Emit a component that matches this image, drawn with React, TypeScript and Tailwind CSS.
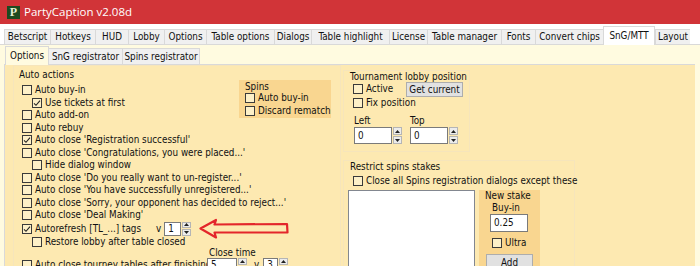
import React from "react";

const tabs = [
  { label: "Betscript", w: "w-[46px]" },
  { label: "Hotkeys", w: "w-[45px]" },
  { label: "HUD", w: "w-[33px]" },
  { label: "Lobby", w: "w-[36px]" },
  { label: "Options", w: "w-[42px]" },
  { label: "Table options", w: "w-[68px]" },
  { label: "Dialogs", w: "w-[37px]" },
  { label: "Table highlight", w: "w-[78px]" },
  { label: "License", w: "w-[38px]" },
  { label: "Table manager", w: "w-[74px]" },
  { label: "Fonts", w: "w-[34px]" },
  { label: "Convert chips", w: "w-[68px]" },
  { label: "SnG/MTT", w: "w-[52px]", active: true },
  { label: "Layout", w: "w-[35px]" },
];

const subTabs = [
  { label: "Options", w: "w-[44px]", active: true },
  { label: "SnG registrator", w: "w-[74px]" },
  { label: "Spins registrator", w: "w-[77px]" },
];

function Box({ checked }: { checked?: boolean }) {
  return (
    <span className="flex h-[10px] w-[10px] shrink-0 items-center justify-center border border-[#3a3a3a] bg-[#fdf0c8]">
      {checked && (
        <svg width="8" height="8" viewBox="0 0 8 8">
          <path d="M1 4.3 L3 6.3 L7 1.6" fill="none" stroke="#222" strokeWidth="1.1" />
        </svg>
      )}
    </span>
  );
}

function Check({
  label,
  checked,
  indent,
}: {
  label: string;
  checked?: boolean;
  indent?: boolean;
}) {
  return (
    <div className={`flex h-[12.5px] items-center ${indent ? "pl-[18px]" : "pl-[8px]"}`}>
      <Box checked={checked} />
      <span className="ml-[3px] whitespace-nowrap">{label}</span>
    </div>
  );
}

function Arrows() {
  return (
    <div className="ml-[1px] flex w-[9px] flex-col gap-[1px]">
      <div className="flex flex-1 items-center justify-center border border-[#b5b5b5] bg-[#ececec]">
        <svg width="5" height="3" viewBox="0 0 5 3">
          <path d="M0 3 L2.5 0 L5 3 Z" fill="#222" />
        </svg>
      </div>
      <div className="flex flex-1 items-center justify-center border border-[#b5b5b5] bg-[#ececec]">
        <svg width="5" height="3" viewBox="0 0 5 3">
          <path d="M0 0 L2.5 3 L5 0 Z" fill="#222" />
        </svg>
      </div>
    </div>
  );
}

function Spin({ value, w, h }: { value: string; w: string; h: string }) {
  return (
    <div className={`flex shrink-0 items-stretch ${h}`}>
      <div className={`flex items-center border border-[#7a7a7a] bg-white pl-[3px] ${w}`}>
        {value}
      </div>
      <Arrows />
    </div>
  );
}

function Button({ label, className }: { label: string; className: string }) {
  return (
    <div
      className={`flex items-center justify-center border border-[#adadad] bg-[#e1e1e1] ${className}`}
    >
      {label}
    </div>
  );
}

export default function App() {
  return (
    <div className="h-[266px] w-[700px] overflow-hidden bg-white font-['DejaVu_Sans',sans-serif] text-[9.8px] leading-none text-[#111] font-stretch-condensed">
      {/* title bar */}
      <div className="flex h-[24px] items-center bg-[#d13438] pl-[7px]">
        <div className="flex h-[13px] w-[13px] items-center justify-center bg-[#1d4a1f] font-['Liberation_Serif',serif] text-[12px] font-bold text-[#e6f0d8] font-stretch-normal">
          P
        </div>
        <span className="ml-[4px] font-['Open_Sans',sans-serif] text-[11.5px] text-white font-stretch-normal">
          PartyCaption v2.08d
        </span>
      </div>

      {/* main tabs */}
      <div className="flex h-[20px] items-end bg-white pl-[4px]">
        {tabs.map((t) =>
          t.active ? (
            <div
              key={t.label}
              className={`relative z-10 -mb-[1px] flex h-[19px] items-center justify-center border border-b-0 border-[#d9d9d9] bg-white ${t.w}`}
            >
              {t.label}
            </div>
          ) : (
            <div
              key={t.label}
              className={`flex h-[15px] items-center justify-center border-t border-l border-[#d9d9d9] bg-[#f0f0f0] ${t.w}`}
            >
              {t.label}
            </div>
          )
        )}
      </div>

      {/* page */}
      <div className="h-full border-t border-[#d9d9d9] bg-[#fffbe0]">
        <div className="flex h-[19px] items-end pl-[5px]">
          {subTabs.map((t) =>
            t.active ? (
              <div
                key={t.label}
                className={`relative z-10 -mb-[1px] flex h-[19px] items-center justify-center border border-b-0 border-[#d9d9d9] bg-[#fffbe0] ${t.w}`}
              >
                {t.label}
              </div>
            ) : (
              <div
                key={t.label}
                className={`flex h-[16px] items-center justify-center border-t border-r border-[#d9d9d9] bg-[#f0f0f0] ${t.w}`}
              >
                {t.label}
              </div>
            )
          )}
        </div>

        {/* yellow panel */}
        <div className="ml-[4px] mr-[5px] flex h-full border-t border-l border-[#d9d9d9] bg-[#fde9b1] pl-[8px]">
          {/* Auto actions */}
          <div className="w-[328px] shrink-0 border border-[#f6e5bb] pt-[2px]">
            <div className="h-[13px] pl-[5px] leading-[13px]">Auto actions</div>
            <div className="mt-[3px] flex items-start">
              <div className="flex-1">
                <Check label="Auto buy-in" />
                <Check label="Use tickets at first" checked indent />
                <Check label="Auto add-on" />
              </div>
              <div className="mr-[9px] -mt-[4px] h-[38px] w-[92px] bg-[#f9d690] pl-[6px] pt-[1px]">
                <div className="h-[11px] leading-[11px]">Spins</div>
                <div className="flex h-[12.5px] items-center">
                  <Box />
                  <span className="ml-[3px]">Auto buy-in</span>
                </div>
                <div className="flex h-[12.5px] items-center">
                  <Box />
                  <span className="ml-[3px]">Discard rematch</span>
                </div>
              </div>
            </div>
            <Check label="Auto rebuy" />
            <Check label="Auto close 'Registration successful'" checked />
            <Check label="Auto close 'Congratulations, you were placed...'" />
            <Check label="Hide dialog window" indent />
            <Check label="Auto close 'Do you really want to un-register...'" />
            <Check label="Auto close 'You have successfully unregistered...'" />
            <Check label="Auto close 'Sorry, your opponent has decided to reject...'" />
            <Check label="Auto close 'Deal Making'" />
            <div className="flex h-[14px] items-center pl-[8px]">
              <Box checked />
              <span className="ml-[3px] w-[121px] whitespace-nowrap">Autorefresh [TL_...] tags</span>
              <span className="mr-[3px]">v</span>
              <Spin value="1" w="w-[17px]" h="h-[14px]" />
              <svg className="ml-[8px] shrink-0" width="90" height="22" viewBox="0 0 90 22">
                <path
                  d="M1.5 10.5 L17 2 L15.5 6.5 L88 6 L88.5 14.5 L15.5 14.5 L17 19.5 Z"
                  fill="none"
                  stroke="#e3262b"
                  strokeWidth="2.2"
                  strokeLinejoin="round"
                />
              </svg>
            </div>
            <Check label="Restore lobby after table closed" indent />
            <div className="h-[10px] pl-[195px] leading-[10px]">Close time</div>
            <div className="flex h-[14px] items-center pl-[8px]">
              <Box />
              <span className="ml-[3px] w-[172px] shrink-0 whitespace-nowrap">
                Auto close tourney tables after finishing
              </span>
              <Spin value="5" w="w-[30px]" h="h-[14px]" />
              <span className="ml-[7px] mr-[4px]">v</span>
              <Spin value="3" w="w-[15px]" h="h-[14px]" />
            </div>
          </div>

          {/* right column */}
          <div className="ml-[2px] flex w-[232px] flex-col">
            <div className="mt-[5px] h-[82px] w-[127px] shrink-0 border border-[#f6e5bb] pl-[6px]">
              <div className="h-[11px] whitespace-nowrap leading-[11px]">
                Tournament lobby position
              </div>
              <div className="flex">
                <div className="w-[56px] pl-[3px]">
                  <div className="flex h-[14px] items-center">
                    <Box />
                    <span className="ml-[3px]">Active</span>
                  </div>
                  <div className="flex h-[14px] items-center">
                    <Box />
                    <span className="ml-[3px] whitespace-nowrap">Fix position</span>
                  </div>
                </div>
                <Button label="Get current" className="h-[15px] w-[57px] whitespace-nowrap" />
              </div>
              <div className="mt-[5px] flex pl-[4px]">
                <div className="w-[56px] leading-[11px]">Left</div>
                <div className="leading-[11px]">Top</div>
              </div>
              <div className="mt-[1px] flex gap-[8px] pl-[4px]">
                <Spin value="0" w="w-[38px]" h="h-[17px]" />
                <Spin value="0" w="w-[38px]" h="h-[17px]" />
              </div>
            </div>

            <div className="mt-[8px] h-[120px] w-[232px] shrink-0 border border-[#f6e5bb] pl-[6px]">
              <div className="h-[11px] leading-[11px]">Restrict spins stakes</div>
              <div className="mt-[2px] flex h-[14px] items-center pl-[3px]">
                <Box />
                <span className="ml-[3px] whitespace-nowrap">
                  Close all Spins registration dialogs except these
                </span>
              </div>
              <div className="mt-[2px] flex">
                <div className="ml-[-2px] h-[100px] w-[127px] border border-[#828790] bg-white" />
                <div className="ml-[4px] h-[100px] w-[61px] bg-[#f9d690] pl-[6px]">
                  <div className="h-[11px] leading-[11px]">New stake</div>
                  <div className="mt-[1px] h-[12px] pl-[7px] leading-[12px]">Buy-in</div>
                  <div className="ml-[5px] flex h-[18px] w-[38px] items-center border border-[#7a7a7a] bg-white pl-[3px]">
                    0.25
                  </div>
                  <div className="ml-[7px] mt-[6px] flex h-[10px] items-center">
                    <Box />
                    <span className="ml-[3px]">Ultra</span>
                  </div>
                  <Button label="Add" className="ml-[1px] mt-[6px] h-[18px] w-[47px]" />
                </div>
              </div>
            </div>
          </div>
        </div>
      </div>
    </div>
  );
}
